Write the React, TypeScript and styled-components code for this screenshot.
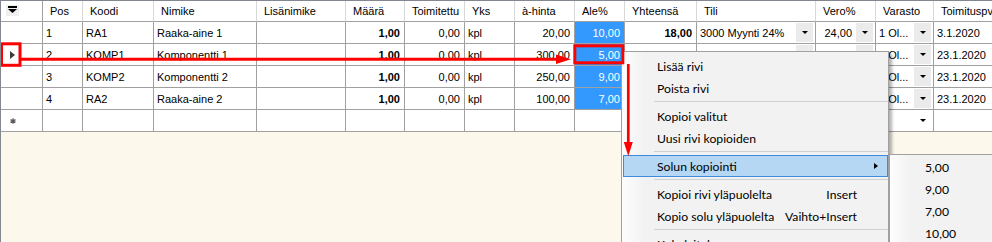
import { FC } from "react";
import styled, { createGlobalStyle } from "styled-components";

const GlobalStyle = createGlobalStyle`
  html, body {
    margin: 0;
    padding: 0;
    background: #fcf8ec;
    overflow: hidden;
  }
`;

type Col = {
  key: string;
  title: string;
  width: number;
  align?: 'left' | 'right';
  bold?: boolean;
  drop?: boolean;
};

const columns: Col[] = [
  { key: 'pos', title: 'Pos', width: 40 },
  { key: 'koodi', title: 'Koodi', width: 71 },
  { key: 'nimike', title: 'Nimike', width: 103 },
  { key: 'lisa', title: 'Lisänimike', width: 89 },
  { key: 'maara', title: 'Määrä', width: 59, align: 'right', bold: true },
  { key: 'toim', title: 'Toimitettu', width: 60, align: 'right' },
  { key: 'yks', title: 'Yks', width: 50 },
  { key: 'hinta', title: 'à-hinta', width: 60, align: 'right' },
  { key: 'ale', title: 'Ale%', width: 50, align: 'right' },
  { key: 'yht', title: 'Yhteensä', width: 72, align: 'right', bold: true },
  { key: 'tili', title: 'Tili', width: 119, drop: true },
  { key: 'vero', title: 'Vero%', width: 60, align: 'right', drop: true },
  { key: 'varasto', title: 'Varasto', width: 58, drop: true },
  { key: 'pvm', title: 'Toimituspv', width: 120 },
];

const rows: Record<string, string>[] = [
  { pos: '1', koodi: 'RA1', nimike: 'Raaka-aine 1', lisa: '', maara: '1,00', toim: '0,00', yks: 'kpl', hinta: '20,00', ale: '10,00', yht: '18,00', tili: '3000 Myynti 24%', vero: '24,00', varasto: '1 Ol...', pvm: '3.1.2020' },
  { pos: '2', koodi: 'KOMP1', nimike: 'Komponentti 1', lisa: '', maara: '1,00', toim: '0,00', yks: 'kpl', hinta: '300,00', ale: '5,00', yht: '285,00', tili: '3000 Myynti 24%', vero: '24,00', varasto: '1 Ol...', pvm: '23.1.2020' },
  { pos: '3', koodi: 'KOMP2', nimike: 'Komponentti 2', lisa: '', maara: '1,00', toim: '0,00', yks: 'kpl', hinta: '250,00', ale: '9,00', yht: '227,50', tili: '3000 Myynti 24%', vero: '24,00', varasto: '1 Ol...', pvm: '23.1.2020' },
  { pos: '4', koodi: 'RA2', nimike: 'Raaka-aine 2', lisa: '', maara: '1,00', toim: '0,00', yks: 'kpl', hinta: '100,00', ale: '7,00', yht: '93,00', tili: '3000 Myynti 24%', vero: '24,00', varasto: '1 Ol...', pvm: '23.1.2020' },
];

const gridTemplate = `42px ${columns.map(c => `${c.width}px`).join(' ')}`;

export default function App() {
  return (
    <>
      <GlobalStyle />
      <S.Grid>
        <S.Row $header>
          <S.HeaderCell $corner>
            <S.FilterBox>
              <svg width="9" height="7" viewBox="0 0 9 7">
                <rect x="0" y="0" width="9" height="2" fill="#000" />
                <polygon points="0,3 9,3 4.5,7" fill="#000" />
              </svg>
            </S.FilterBox>
          </S.HeaderCell>
          {columns.map(c => (
            <S.HeaderCell key={c.key}>{c.title}</S.HeaderCell>
          ))}
        </S.Row>

        {rows.map((r, i) => (
          <S.Row key={r.pos}>
            <S.RowHeader>
              {i === 1 && (
                <svg width="5" height="8" viewBox="0 0 5 8">
                  <polygon points="0,0 5,4 0,8" fill="#3c3c3c" />
                </svg>
              )}
            </S.RowHeader>
            {columns.map(c => (
              <S.Cell
                key={c.key}
                $align={c.align ?? 'left'}
                $bold={c.bold}
                $selected={c.key === 'ale'}
              >
                <S.CellText $align={c.align ?? 'left'}>{r[c.key]}</S.CellText>
                {c.drop && <S.DropButton />}
              </S.Cell>
            ))}
          </S.Row>
        ))}

        <S.Row>
          <S.RowHeader>
            <svg width="6" height="6" viewBox="0 0 6 6">
              <path d="M3 0.3 V5.7 M0.5 1.6 L5.5 4.4 M0.5 4.4 L5.5 1.6" stroke="#5a5a5a" strokeWidth="1.3" />
            </svg>
          </S.RowHeader>
          {columns.map(c => (
            <S.Cell key={c.key} $align="left">
              <S.CellText $align="left" />
              {c.drop && <S.DropButton $bare />}
            </S.Cell>
          ))}
        </S.Row>

        <S.Menu>
          <S.MenuItem>Lisää rivi</S.MenuItem>
          <S.MenuItem>Poista rivi</S.MenuItem>
          <S.Separator />
          <S.MenuItem>Kopioi valitut</S.MenuItem>
          <S.MenuItem>Uusi rivi kopioiden</S.MenuItem>
          <S.Separator />
          <S.MenuItem $active>
            <span>Solun kopiointi</span>
            <S.SubArrow />
          </S.MenuItem>
          <S.Separator />
          <S.MenuItem>
            <span>Kopioi rivi yläpuolelta</span>
            <S.Shortcut>Insert</S.Shortcut>
          </S.MenuItem>
          <S.MenuItem>
            <span>Kopio solu yläpuolelta</span>
            <S.Shortcut>Vaihto+Insert</S.Shortcut>
          </S.MenuItem>
          <S.Separator />
          <S.MenuItem>Kokolaitelma</S.MenuItem>
        </S.Menu>

        <S.SubMenu>
          {['5,00', '9,00', '7,00', '10,00'].map(v => (
            <S.SubItem key={v}>{v}</S.SubItem>
          ))}
        </S.SubMenu>

        <S.Marks width="992" height="242" viewBox="0 0 992 242">
          <rect x="1.5" y="43.8" width="18.5" height="21.5" fill="none" stroke="#ff0000" strokeWidth="3" />
          <line x1="20" y1="59.3" x2="557" y2="59.3" stroke="#ff0000" strokeWidth="3" />
          <polygon points="556,54.6 571,59.3 556,64" fill="#ff0000" />
          <rect x="574.8" y="45.8" width="48" height="17" fill="none" stroke="#ff0000" strokeWidth="3" />
          <line x1="628.3" y1="64" x2="628.3" y2="144" stroke="#ff0000" strokeWidth="2.7" />
          <polygon points="623.8,142 632.8,142 628.3,156" fill="#ff0000" />
        </S.Marks>
      </S.Grid>
    </>
  );
}

const S = {
  Grid: styled.div`
    position: relative;
    box-sizing: border-box;
    width: 992px;
    height: 242px;
    overflow: hidden;
    background: #fcf8ec;
    border-left: 1px solid #828790;
    border-top: 1px solid #828790;
    font-family: "Liberation Sans", Arial, sans-serif;
    font-size: 11px;
    color: #000;
  `,
  Row: styled.div<{ $header?: boolean }>`
    display: grid;
    grid-template-columns: ${gridTemplate};
    height: ${p => (p.$header ? 21 : 22)}px;
    width: max-content;
  `,
  HeaderCell: styled.div<{ $corner?: boolean }>`
    box-sizing: border-box;
    display: flex;
    align-items: center;
    padding-left: ${p => (p.$corner ? 5 : 7)}px;
    background: #fff;
    border-right: 1px solid ${p => (p.$corner ? '#a0a0a0' : '#d8d8d8')};
    border-bottom: 1px solid #a0a0a0;
    white-space: nowrap;
    overflow: hidden;
  `,
  FilterBox: styled.div`
    width: 13px;
    height: 10px;
    background: #efefef;
    display: flex;
    align-items: flex-start;
    justify-content: center;
    padding-top: 1px;
    margin-top: -2px;
  `,
  RowHeader: styled.div`
    box-sizing: border-box;
    display: flex;
    align-items: center;
    padding-left: 9px;
    background: #fff;
    border-right: 1px solid #a0a0a0;
    border-bottom: 1px solid #a0a0a0;
  `,
  Cell: styled.div<{ $align: 'left' | 'right'; $bold?: boolean; $selected?: boolean }>`
    box-sizing: border-box;
    display: flex;
    align-items: center;
    padding: 0 2px 0 3px;
    background: ${p => (p.$selected ? '#3399ff' : '#fff')};
    color: ${p => (p.$selected ? '#fff' : '#000')};
    font-weight: ${p => (p.$bold ? 700 : 400)};
    border-right: 1px solid #a0a0a0;
    border-bottom: 1px solid #a0a0a0;
    white-space: nowrap;
    overflow: hidden;
  `,
  CellText: styled.span<{ $align: 'left' | 'right' }>`
    flex: 1;
    text-align: ${p => p.$align};
    padding-right: ${p => (p.$align === 'right' ? 2 : 0)}px;
    overflow: hidden;
  `,
  DropButton: styled.div<{ $bare?: boolean }>`
    position: relative;
    flex: none;
    width: 17px;
    height: 19px;
    margin-left: 2px;
    background: ${p => (p.$bare ? 'transparent' : '#ebebeb')};
    &::after {
      content: '';
      position: absolute;
      left: 6px;
      top: 8px;
      border-left: 3px solid transparent;
      border-right: 3px solid transparent;
      border-top: 3px solid #000;
    }
  `,
  Menu: styled.div`
    position: absolute;
    left: 620px;
    top: 50px;
    width: 268px;
    box-sizing: border-box;
    padding: 3px 0 0 1px;
    background: linear-gradient(to right, #fdfdfd 0px, #f1f1f1 24px, #f2f2f2 25px);
    border: 1px solid #a0a0a0;
    box-shadow: 3px 3px 3px rgba(0, 0, 0, 0.3);
    font-family: Lato, "Noto Sans", sans-serif;
    font-size: 12.2px;
    color: #000;
    height: 220px;
  `,
  MenuItem: styled.div<{ $active?: boolean }>`
    box-sizing: border-box;
    display: flex;
    align-items: center;
    height: 22px;
    padding: 0 30px 0 33px;
    border: 1px solid ${p => (p.$active ? '#3c8cdb' : 'transparent')};
    background: ${p => (p.$active ? '#b5d7f3' : 'transparent')};
    position: relative;
    white-space: nowrap;
  `,
  Shortcut: styled.span`
    margin-left: auto;
  `,
  SubArrow: styled.span`
    position: absolute;
    right: 9px;
    top: 7px;
    border-top: 3.5px solid transparent;
    border-bottom: 3.5px solid transparent;
    border-left: 4px solid #000;
  `,
  Separator: styled.div`
    height: 6px;
    margin-left: 31px;
    box-sizing: border-box;
    padding-top: 2px;
    &::before {
      content: '';
      display: block;
      border-top: 1px solid #d0d0d0;
    }
  `,
  SubMenu: styled.div`
    position: absolute;
    left: 888px;
    top: 153px;
    width: 130px;
    height: 120px;
    box-sizing: border-box;
    padding: 1px 0 0 0;
    background: linear-gradient(to right, #fdfdfd 0px, #f1f1f1 23px, #f2f2f2 24px);
    border: 1px solid #a0a0a0;
    font-family: Lato, "Noto Sans", sans-serif;
    font-size: 12.2px;
    color: #000;
  `,
  SubItem: styled.div`
    height: 22px;
    display: flex;
    align-items: center;
    padding-left: 35px;
  `,
  Marks: styled.svg`
    position: absolute;
    left: -1px;
    top: -1px;
    pointer-events: none;
  `,
};
